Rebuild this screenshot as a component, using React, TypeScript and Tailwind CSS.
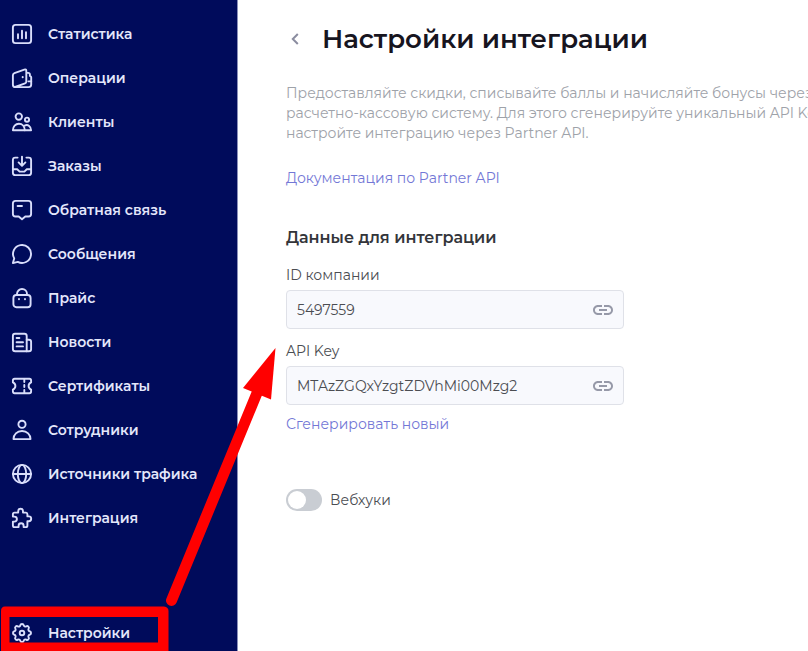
import { useState } from 'react';
import type { ReactNode } from 'react';
import { MdLink } from 'react-icons/md';

interface MenuEntry {
  label: string;
  icon: ReactNode;
}

const menu: MenuEntry[] = [
  {
    label: 'Статистика',
    icon: (
      <>
        <rect x="2.9" y="2.9" width="18.2" height="18.2" rx="2.6" />
        <path d="M8 12.3v4M12 8.7v7.6M16 10.3v6" />
      </>
    ),
  },
  {
    label: 'Операции',
    icon: (
      <>
        <path d="M5.2 21 15 17.4Q16.3 16.9 16.3 15.5V5Q16.3 2.9 14.3 3.6L4.4 7.1Q2.9 7.7 2.9 9.2V18.7Q2.9 21.1 5.3 21.1H18.5Q21.2 21.1 21.2 18.5V11.2Q21.2 10 19.9 9.9V8.6Q19.9 6.9 18.2 6.9H16.3" />
        <path d="M18.4 15.4H21.2" />
        <path d="M12.7 11v.2" strokeWidth="2" />
      </>
    ),
  },
  {
    label: 'Клиенты',
    icon: (
      <>
        <circle cx="8.8" cy="6.6" r="3.2" />
        <circle cx="17" cy="9.7" r="2.1" />
        <path d="M2.9 20.3C2.9 16.4 5.5 13.7 8.9 13.7S14.8 16.4 14.8 20.3Z" />
        <path d="M14.6 15.6C18 14 21.1 16.5 21.1 20.3H14.8" />
      </>
    ),
  },
  {
    label: 'Заказы',
    icon: (
      <>
        <path d="M7.6 3.6H5.3Q2.9 3.6 2.9 6V18.7Q2.9 21.1 5.3 21.1H18.7Q21.1 21.1 21.1 18.7V6Q21.1 3.6 18.7 3.6H16.4" />
        <path d="M2.9 15.3H7.2L9.6 17.6H14.4L16.8 15.3H21.1" />
        <path d="M12 2.6V11.6M8.6 8.4 12 11.8 15.4 8.4" />
      </>
    ),
  },
  {
    label: 'Обратная связь',
    icon: (
      <>
        <path d="M5.5 2.9H18.5Q21.1 2.9 21.1 5.5V16Q21.1 18.5 18.5 18.5H15.3L12 21.3 8.7 18.5H5.5Q2.9 18.5 2.9 16V5.5Q2.9 2.9 5.5 2.9Z" />
        <path d="M7.6 8H12" />
      </>
    ),
  },
  {
    label: 'Сообщения',
    icon: <path d="M2.9 21.1 4.2 16.4A9 9 0 1 1 7.8 19.9Z" />,
  },
  {
    label: 'Прайс',
    icon: (
      <>
        <rect x="3.4" y="9" width="17.2" height="12.2" rx="3" />
        <path d="M7 8.8V8a5 5 0 0 1 10 0v.8" />
        <path d="M9 13v.3M15 13v.3" />
      </>
    ),
  },
  {
    label: 'Новости',
    icon: (
      <>
        <path d="M5 3.7H14.4Q16.7 3.7 16.7 6V21.3H5.2Q2.9 21.3 2.9 19V6Q2.9 3.7 5 3.7Z" />
        <path d="M16.7 9.7H19Q21.1 9.7 21.1 11.8V19.2Q21.1 21.3 19 21.3H16.7" />
        <path d="M6.6 8H9.4M6.6 12.2H13M6.6 16.4H13" />
      </>
    ),
  },
  {
    label: 'Сертификаты',
    icon: (
      <>
        <path d="M4.6 4.7H19.4Q21.1 4.7 21.1 6.4V8.4Q18.6 9.6 18.6 12T21.1 15.6V17.6Q21.1 19.3 19.4 19.3H4.6Q2.9 19.3 2.9 17.6V15.6Q5.4 14.4 5.4 12T2.9 8.4V6.4Q2.9 4.7 4.6 4.7Z" />
        <path d="M14.3 5V8M14.3 11V13M14.3 16V19" />
      </>
    ),
  },
  {
    label: 'Сотрудники',
    icon: (
      <>
        <circle cx="12" cy="6.3" r="3.6" />
        <path d="M3.5 21.1C3.5 16.5 7 13 12 13S20.5 16.5 20.5 21.1Z" />
      </>
    ),
  },
  {
    label: 'Источники трафика',
    icon: (
      <>
        <circle cx="12" cy="12" r="9.1" />
        <ellipse cx="12" cy="12" rx="4.2" ry="9.1" />
        <path d="M2.9 12H21.1" />
      </>
    ),
  },
  {
    label: 'Интеграция',
    icon: (
      <path d="M8.2 6.6V5.2a2.4 2.4 0 0 1 4.8 0V6.6H16Q17.4 6.6 17.4 8.2V10.4H18.8a2.4 2.4 0 0 1 0 4.8H17.4V19.4Q17.4 21.1 15.8 21.1H13.6V19.7a2.5 2.5 0 0 0-5 0V21.1H4.5Q2.9 21.1 2.9 19.5V15.6H4.4a2.5 2.5 0 0 0 0-5H2.9V8.2Q2.9 6.6 4.5 6.6Z" />
    ),
  },
];

const settings: MenuEntry = {
  label: 'Настройки',
  icon: (
    <>
      <path d="M10.3 4.3c.4-1.8 3-1.8 3.4 0a1.7 1.7 0 0 0 2.5 1.1c1.6-1 3.4.8 2.4 2.4a1.7 1.7 0 0 0 1.1 2.5c1.8.4 1.8 3 0 3.4a1.7 1.7 0 0 0-1.1 2.5c1 1.6-.8 3.4-2.4 2.4a1.7 1.7 0 0 0-2.5 1.1c-.4 1.8-3 1.8-3.4 0a1.7 1.7 0 0 0-2.5-1.1c-1.6 1-3.4-.8-2.4-2.4a1.7 1.7 0 0 0-1.1-2.5c-1.8-.4-1.8-3 0-3.4a1.7 1.7 0 0 0 1.1-2.5c-1-1.6.8-3.4 2.4-2.4 1 .6 2.3.1 2.5-1.1Z" />
      <circle cx="12" cy="12" r="2.3" />
    </>
  ),
};

function MenuLink({ item }: { item: MenuEntry }) {
  return (
    <a href="#" className="flex items-center gap-3.5 pl-2.5 h-11 text-sm font-semibold text-[#e4e7fb]">
      <svg
        viewBox="0 0 24 24"
        className="w-6 h-6 shrink-0"
        fill="none"
        stroke="#d9defb"
        strokeWidth="1.9"
        strokeLinecap="round"
        strokeLinejoin="round"
        aria-hidden="true"
      >
        {item.icon}
      </svg>
      <span className="whitespace-nowrap">{item.label}</span>
    </a>
  );
}

interface CopyFieldProps {
  id: string;
  label: string;
  value: string;
}

function CopyField({ id, label, value }: CopyFieldProps) {
  return (
    <div>
      <label htmlFor={id} className="block text-sm text-[#4b4d52] mb-[5px]">
        {label}
      </label>
      <div className="flex items-center h-[39px] px-2 bg-[#f8f9fd] border border-[#dfe1e8] rounded">
        <input
          id={id}
          readOnly
          value={value}
          className="flex-1 min-w-0 pl-0.5 bg-transparent text-sm text-[#4b4d52] outline-none"
        />
        <button type="button" aria-label="Скопировать" className="text-[#9699a8]">
          <MdLink className="w-6 h-6" />
        </button>
      </div>
    </div>
  );
}

export default function App() {
  const [webhooks, setWebhooks] = useState(false);

  return (
    <div className="relative flex min-h-screen overflow-hidden bg-white font-['Montserrat','Inter','Noto_Sans',sans-serif]">
      <aside className="flex flex-col w-[238px] shrink-0 bg-[#000b5b] border-r border-[#8a8fb8]">
        <nav className="flex flex-col pt-3">
          {menu.map((item) => (
            <MenuLink key={item.label} item={item} />
          ))}
        </nav>
        <div className="mt-auto h-10">
          <MenuLink item={settings} />
        </div>
      </aside>

      <main className="flex-1 min-w-0 pl-12 pt-[23px]">
        <div className="flex items-center">
          <button type="button" aria-label="Назад" className="w-9 pl-1">
            <svg viewBox="0 0 10 14" className="w-2.5 h-3.5" fill="none" stroke="#8b8da0" strokeWidth="2">
              <path d="M7.8 2 2.8 7 7.8 12" />
            </svg>
          </button>
          <h1 className="text-[26px] leading-8 font-semibold text-[#17151f] whitespace-nowrap">
            Настройки интеграции
          </h1>
        </div>

        <p className="mt-7 text-sm leading-5 text-[#9ea2a9] whitespace-nowrap">
          Предоставляйте скидки, списывайте баллы и начисляйте бонусы через
          <br />
          расчетно-кассовую систему. Для этого сгенерируйте уникальный API Key и
          <br />
          настройте интеграцию через Partner API.
        </p>

        <a href="#" className="block mt-[25px] text-sm text-[#7377d6]">
          Документация по Partner API
        </a>

        <section className="mt-[38px] max-w-[338px]">
          <h2 className="text-base font-semibold text-[#33353a] mb-[15px]">Данные для интеграции</h2>
          <div className="flex flex-col gap-3">
            <CopyField id="company-id" label="ID компании" value="5497559" />
            <CopyField id="api-key" label="API Key" value="MTAzZGQxYzgtZDVhMi00Mzg2" />
          </div>
          <button type="button" className="block mt-[9px] text-sm text-[#7377d6]">
            Сгенерировать новый
          </button>
        </section>

        <label className="inline-flex items-center gap-2 mt-[55px] text-sm text-[#4b4d52]">
          <input
            type="checkbox"
            checked={webhooks}
            onChange={(e) => setWebhooks(e.target.checked)}
            className="peer sr-only"
          />
          <span className="flex w-9 h-[22px] p-0.5 rounded-full bg-[#c9cdd3] peer-checked:bg-[#7377d6] peer-checked:justify-end">
            <span className="w-[18px] h-[18px] rounded-full bg-white" />
          </span>
          Вебхуки
        </label>
      </main>

      {/* red frame around the settings link and the arrow to the fields */}
      <svg
        width="300"
        height="651"
        viewBox="0 0 300 651"
        className="absolute left-0 bottom-0 pointer-events-none"
        aria-hidden="true"
      >
        <path
          fillRule="evenodd"
          fill="#ff0000"
          d="M5 606.5H164Q168.500 607 168.500 611V651H1V611Q1 606.500 5 606.500ZM9.500 617V642.500H158V617Z"
        />
        <path d="M171.500 600.500 257 393" stroke="#ff0000" strokeWidth="11" strokeLinecap="round" />
        <path d="M275.500 348 271 399.500 243 388Z" fill="#ff0000" />
      </svg>
    </div>
  );
}
